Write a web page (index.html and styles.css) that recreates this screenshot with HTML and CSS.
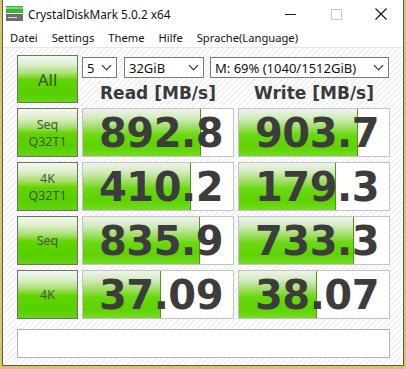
FILE: index.html
```html
<!DOCTYPE html>
<html lang="de">
<head>
    <meta charset="UTF-8">
    <title>CrystalDiskMark 5.0.2 x64</title>
    <link rel="stylesheet" href="styles.css">
</head>
<body>
    <div class="window">
        <div class="titlebar">
            <svg class="app-icon" width="18" height="16" viewBox="0 0 18 16">
                <rect x="0" y="0" width="17" height="7" fill="#3cb43c"/>
                <rect x="0" y="1" width="17" height="2" fill="#7ad67a"/>
                <rect x="0" y="8" width="17" height="7" fill="#6e6e6e"/>
                <rect x="2" y="11" width="9" height="1" fill="#d8d8d8"/>
            </svg>
            <span class="title">CrystalDiskMark 5.0.2 x64</span>
            <div class="controls">
                <span class="ctl ctl-min"></span>
                <span class="ctl ctl-max"></span>
                <svg class="ctl-close" width="12" height="12" viewBox="0 0 12 12">
                    <path d="M0.5 0.5 L11.5 11.5 M11.5 0.5 L0.5 11.5" stroke="#111" stroke-width="1.1"/>
                </svg>
            </div>
        </div>

        <div class="menubar">
            <span>Datei</span>
            <span>Settings</span>
            <span>Theme</span>
            <span>Hilfe</span>
            <span>Sprache(Language)</span>
        </div>

        <div class="client">
            <div class="board">
                <div class="btn btn-all">All</div>
                <div class="options">
                    <div class="select sel-count">5<i></i></div>
                    <div class="select sel-size">32GiB<i></i></div>
                    <div class="select sel-drive">M: 69% (1040/1512GiB)<i></i></div>
                </div>
                <div class="head head-read">Read [MB/s]</div>
                <div class="head head-write">Write [MB/s]</div>

                <div class="btn">Seq<br>Q32T1</div>
                <div class="cell"><div class="bar" style="width: 118px"></div><span>892.8</span></div>
                <div class="cell"><div class="bar" style="width: 119px"></div><span>903.7</span></div>

                <div class="btn">4K<br>Q32T1</div>
                <div class="cell"><div class="bar" style="width: 108px"></div><span>410.2</span></div>
                <div class="cell"><div class="bar" style="width: 97px"></div><span>179.3</span></div>

                <div class="btn">Seq</div>
                <div class="cell"><div class="bar" style="width: 117px"></div><span>835.9</span></div>
                <div class="cell"><div class="bar" style="width: 115px"></div><span>733.3</span></div>

                <div class="btn">4K</div>
                <div class="cell"><div class="bar" style="width: 78px"></div><span>37.09</span></div>
                <div class="cell"><div class="bar" style="width: 78px"></div><span>38.07</span></div>
            </div>
            <div class="comment"></div>
        </div>
    </div>
</body>
</html>
```

FILE: styles.css
```css
body {
    margin: 0;
    background: #d9c46a;
    font-family: 'Noto Sans', 'Open Sans', sans-serif;
    height: 369px;
    overflow: hidden;
}
.window {
    margin-left: 2px;
    width: 400px;
    height: 365px;
    background: #fff;
    border: 1px solid #5a5a5a;
    border-top: none;
    display: flex;
    flex-direction: column;
}
.titlebar {
    height: 28px;
    display: flex;
    align-items: center;
    padding-left: 3px;
}
.app-icon {
    margin-top: -1px;
}
.title {
    margin-left: 4px;
    font-size: 11.8px;
    color: #111;
}
.controls {
    margin-left: auto;
    display: flex;
    align-items: center;
}
.ctl-min {
    width: 11px;
    height: 1px;
    background: #222;
    margin-right: 35px;
}
.ctl-max {
    width: 9px;
    height: 9px;
    border: 1px solid #c8c8c8;
    margin-right: 33px;
}
.ctl-close {
    margin-right: 16px;
}
.menubar {
    height: 19px;
    display: flex;
    align-items: center;
    gap: 14px;
    padding-left: 7px;
    font-size: 11.2px;
    color: #111;
    border-bottom: 1px solid #e6e6e6;
}
.client {
    flex: 1;
    padding: 7px 0 0 14px;
    background: repeating-linear-gradient(-45deg, #ffffff 0 2px, #f2f2f2 2px 4px);
}
.board {
    display: grid;
    grid-template-columns: 61px 152px 152px;
    grid-template-rows: 48px repeat(4, 49px);
    column-gap: 4px;
    row-gap: 5px;
}
.btn {
    box-sizing: border-box;
    border: 1px solid #6e7468;
    background: linear-gradient(#f4f8f0 0%, #dcefcc 18%, #a8e070 38%, #62d400 52%, #56cf00 80%, #66d414 100%);
    display: flex;
    align-items: center;
    justify-content: center;
    text-align: center;
    font-size: 12.5px;
    line-height: 17px;
    color: #46583a;
}
.btn-all {
    grid-row: 1;
    font-size: 17px;
    color: #35552a;
}
.options {
    grid-column: 2 / 4;
    grid-row: 1;
    display: flex;
    gap: 6px;
    align-items: flex-start;
    padding-top: 2px;
}
.select {
    box-sizing: border-box;
    height: 21px;
    border: 1px solid #7a7a7a;
    background: #fff;
    font-size: 13px;
    color: #111;
    display: flex;
    align-items: center;
    padding-left: 4px;
    position: relative;
}
.select i {
    position: absolute;
    right: 6px;
    top: 4px;
    width: 6px;
    height: 6px;
    border-right: 1.6px solid #222;
    border-bottom: 1.6px solid #222;
    transform: rotate(45deg);
}
.sel-count { width: 35px; }
.sel-size { width: 80px; margin-left: 1px; }
.sel-drive { width: 179px; }
.head {
    grid-row: 1;
    align-self: end;
    text-align: center;
    font-family: 'DejaVu Sans', sans-serif;
    font-weight: bold;
    font-size: 17px;
    line-height: 20px;
    color: #3a3a3a;
}
.head-read { grid-column: 2; }
.head-write { grid-column: 3; }
.cell {
    box-sizing: border-box;
    border: 1px solid #c4c4c4;
    background: #fff;
    position: relative;
    display: flex;
    align-items: center;
    justify-content: flex-end;
    padding-right: 10px;
}
.bar {
    position: absolute;
    left: 0;
    top: 0;
    bottom: 0;
    box-sizing: border-box;
    border-right: 1px solid #4f9a12;
    background: linear-gradient(#eef3ea 0%, #d4ecc2 18%, #a2de68 38%, #6ad812 55%, #5ed300 80%, #74da24 100%);
}
.cell span {
    position: relative;
    font-family: 'DejaVu Sans', sans-serif;
    font-weight: bold;
    font-size: 40px;
    letter-spacing: -0.5px;
    color: #3c3c3c;
}
.comment {
    box-sizing: border-box;
    width: 373px;
    height: 29px;
    margin-top: 10px;
    border: 1px solid #b4b4b4;
    background: #fff;
}
```
